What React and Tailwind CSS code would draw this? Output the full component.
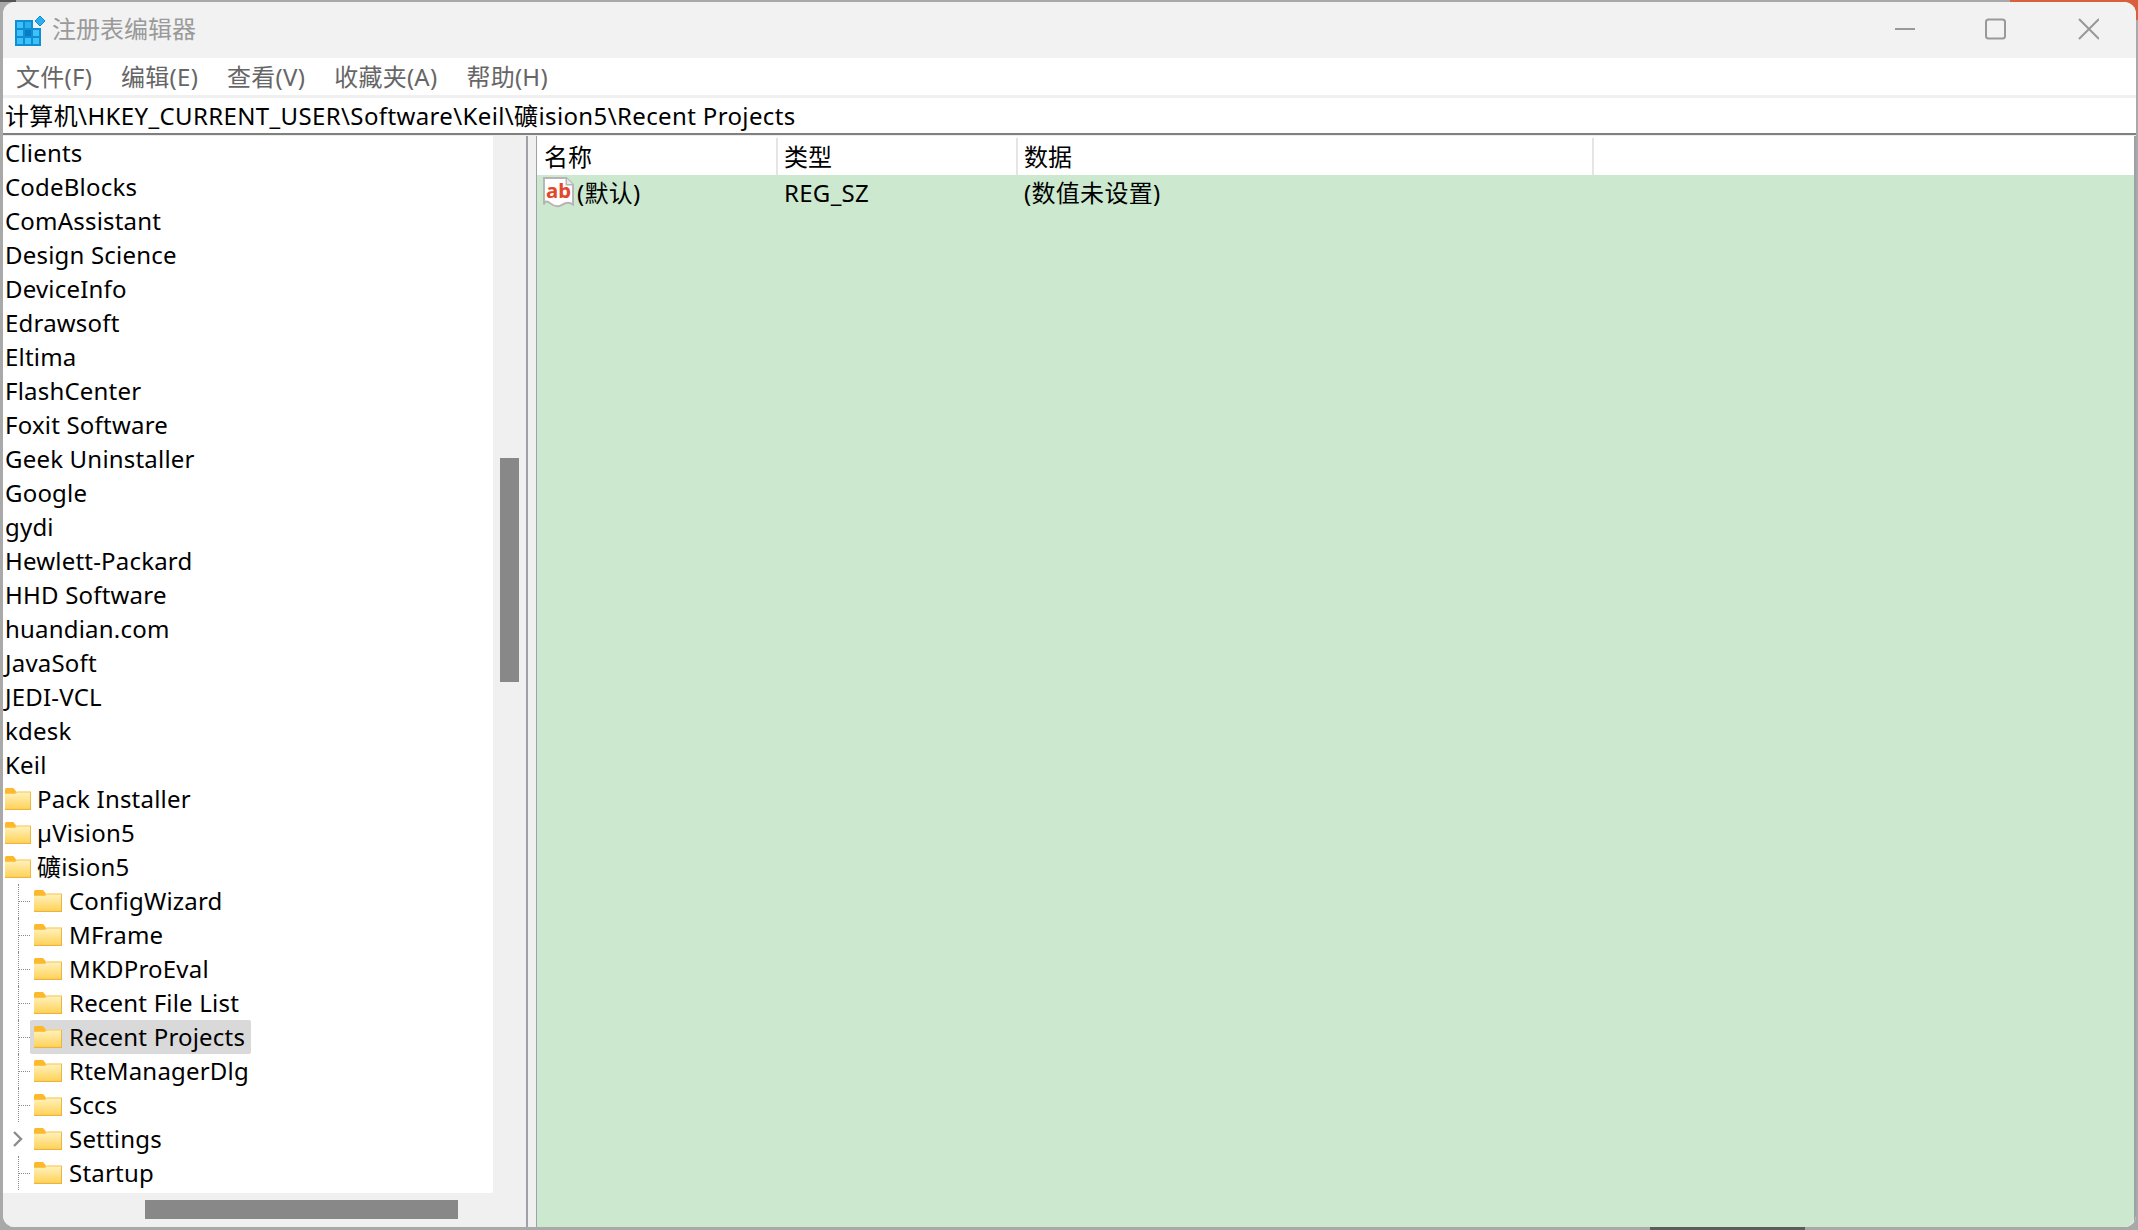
import React from "react";

const Folder = ({ w = 28 }) => (
  <svg width={w} height="22" viewBox="0 0 28 22" preserveAspectRatio="none" className="shrink-0">
    <defs>
      <linearGradient id="fg" x1="0" y1="0" x2="0" y2="1">
        <stop offset="0" stopColor="#fff3c2" />
        <stop offset="1" stopColor="#ffd053" />
      </linearGradient>
    </defs>
    <path d="M0 1.5 Q0 0 1.5 0 H9 L12 3.5 V6 H0 Z" fill="#fdb92b" />
    <path d="M0 5 H11 L13 3.5 H27 Q28 3.5 28 4.5 V22 H0 Z" fill="url(#fg)" />
    <path d="M0 21.4 H28 M27.6 4 V22" stroke="#e8b13c" strokeWidth="1" fill="none" />
    <path d="M0 5.5 H11 L13 4 H28" stroke="#f7c64f" strokeWidth="1" fill="none" />
  </svg>
);

const top = ["Clients","CodeBlocks","ComAssistant","Design Science","DeviceInfo","Edrawsoft","Eltima","FlashCenter","Foxit Software","Geek Uninstaller","Google","gydi","Hewlett-Packard","HHD Software","huandian.com","JavaSoft","JEDI-VCL","kdesk","Keil"];
const level1 = ["Pack Installer","µVision5","礦ision5"];
const level2 = ["ConfigWizard","MFrame","MKDProEval","Recent File List","Recent Projects","RteManagerDlg","Sccs","Settings","Startup"];

const Row = ({ children }) => <div className="h-[34px] flex items-center whitespace-nowrap">{children}</div>;

function Child({ name }) {
  const selected = name === "Recent Projects";
  const expander = name === "Settings";
  return (
    <Row>
      <div className="w-[25px] h-full shrink-0 relative">
        {!expander && (
          <>
            <div className="absolute left-[13px] top-0 bottom-0 border-l border-dotted border-[#8a8a8a]" />
            <div className="absolute left-[14px] right-0 top-[17px] border-t border-dotted border-[#8a8a8a]" />
          </>
        )}
        {expander && (
          <svg width="12" height="18" viewBox="0 0 12 18" className="absolute left-[7px] top-[8px]">
            <path d="M2 2 L9 9 L2 16" stroke="#8c8c8c" strokeWidth="2.4" fill="none" />
          </svg>
        )}
      </div>
      <div className={`h-full flex items-center pl-[4px] pr-[6px] rounded-[2px] ${selected ? "bg-[#d9d9d9]" : ""}`}>
        <Folder />
        <span className="ml-[7px]">{name}</span>
      </div>
    </Row>
  );
}

const menus = ["文件(F)", "编辑(E)", "查看(V)", "收藏夹(A)", "帮助(H)"];

export default function App() {
  return (
    <div className="relative w-[2138px] h-[1230px] bg-[#a9a9a9] pt-[2px] pl-[3px] pr-[2px] pb-[3px] overflow-hidden font-['Noto_Sans','Noto_Sans_CJK_SC',sans-serif] text-[24px] leading-[34px] text-black">
      {/* desktop showing behind the window */}
      <div className="absolute left-[2010px] top-0 w-[128px] h-[20px] bg-[#d9603c]" />
      <div className="absolute left-[1650px] top-[1227px] w-[155px] h-[3px] bg-[#5c5c5c]" />
      <div className="absolute left-0 top-0 w-[16px] h-[2px] bg-[#555]" />
      <div className="relative w-full h-full bg-[#f0f0f0] rounded-[12px] overflow-hidden flex flex-col">
        {/* title bar */}
        <div className="h-[56px] shrink-0 flex items-center bg-[#f2f2f2]">
          <svg width="30" height="30" viewBox="0 0 30 30" className="ml-[12px] mt-[2px] shrink-0">
            <rect x="0" y="4" width="26" height="26" fill="#0d8fd6" />
            <rect x="18" y="0" width="12" height="12" fill="#f2f2f2" />
            <g fill="#3fc1f7">
              <rect x="2" y="6" width="6" height="6" /><rect x="10" y="6" width="6" height="6" fill="#2ab0ee" />
              <rect x="2" y="14" width="6" height="6" /><rect x="10" y="14" width="6" height="6" fill="#0b7cc2" /><rect x="18" y="14" width="6" height="6" />
              <rect x="2" y="22" width="6" height="6" /><rect x="10" y="22" width="6" height="6" /><rect x="18" y="22" width="6" height="6" />
            </g>
            <path d="M25 0 L30 5 L25 10 L20 5 Z" fill="#2ab0ee" stroke="#0d8fd6" strokeWidth="1" />
          </svg>
          <span className="ml-[7px] text-[#9a9a9a] -translate-y-[1px]">注册表编辑器</span>
          <div className="flex-1" />
          <svg width="214" height="24" viewBox="0 0 214 24" className="mr-[37px] -translate-y-[1px] shrink-0" fill="none" stroke="#999" strokeWidth="2">
            <path d="M10 12 H30" />
            <rect x="101" y="2.5" width="19" height="19" rx="2.5" />
            <path d="M194 2 L214 22 M214 2 L194 22" />
          </svg>
        </div>
        {/* menu */}
        <div className="h-[37px] shrink-0 bg-white flex items-center gap-[29px] pl-[13px] text-[#666] tracking-[0.25px]">
          {menus.map((m) => <span key={m}>{m}</span>)}
        </div>
        {/* address */}
        <div className="h-[35px] mt-[3px] shrink-0 bg-white flex items-center pl-[2px] whitespace-nowrap tracking-[0.37px]">
          计算机\HKEY_CURRENT_USER\Software\Keil\礦ision5\Recent Projects
        </div>
        <div className="h-[2px] shrink-0 bg-[#808080]" />
        {/* body */}
        <div className="flex-1 flex min-h-0 pt-[1px] bg-[#e8f0e8]">
          {/* tree */}
          <div className="w-[525px] shrink-0 flex flex-col border-r-2 border-[#a0a0a8] tracking-[0.2px]">
            <div className="h-[1057px] shrink-0 flex">
              <div className="w-[490px] shrink-0 bg-white pl-[2px] rounded-br-[2px] overflow-hidden">
                {top.map((t) => <Row key={t}>{t}</Row>)}
                {level1.map((t) => (
                  <Row key={t}>
                    <Folder w={26} />
                    <span className="ml-[6px]">{t}</span>
                  </Row>
                ))}
                {level2.map((t) => <Child key={t} name={t} />)}
              </div>
              <div className="flex-1 bg-[#f0f0f0] pl-[7px] pt-[322px]">
                <div className="w-[19px] h-[224px] bg-[#888]" />
              </div>
            </div>
            <div className="flex-1 bg-[#f0f0f0] pl-[142px] pt-[7px]">
              <div className="w-[313px] h-[19px] bg-[#888]" />
            </div>
          </div>
          {/* splitter */}
          <div className="w-[8px] shrink-0 bg-[#f0f0f0]" />
          {/* list */}
          <div className="flex-1 flex flex-col border-l border-r-2 border-[#a0a0a8]">
            <div className="h-[39px] shrink-0 bg-white flex pt-[2px]">
              <div className="w-[241px] pl-[7px] flex items-center border-r-2 border-[#e5e5e5]">名称</div>
              <div className="w-[240px] pl-[6px] flex items-center border-r-2 border-[#e5e5e5]">类型</div>
              <div className="w-[576px] pl-[6px] flex items-center border-r-2 border-[#e5e5e5]">数据</div>
            </div>
            <div className="flex-1 bg-[#cce8cf] rounded-br-[10px] pt-[1px] tracking-[0.3px]">
              <div className="h-[34px] flex items-center whitespace-nowrap">
                <div className="w-[241px] flex items-center pl-[6px]">
                  <svg width="31" height="32" viewBox="0 0 32 32" className="shrink-0 -translate-y-[1px]">
                    <path d="M1 1.5 H24 L31 8.5 V29 Q26 25 20 29 T8 28 T1 29 Z" fill="#fff" stroke="#b5b5b5" strokeWidth="2" />
                    <path d="M24 1.5 V8.5 H31" fill="#e8e8e8" stroke="#b5b5b5" strokeWidth="1.5" />
                    <text x="3" y="22" fill="#e0492a" fontSize="21" fontWeight="700" fontFamily="Noto Sans, sans-serif">ab</text>
                  </svg>
                  <span className="ml-[3px]">(默认)</span>
                </div>
                <div className="w-[240px] pl-[6px]">REG_SZ</div>
                <div className="pl-[6px]">(数值未设置)</div>
              </div>
            </div>
          </div>
        </div>
      </div>
    </div>
  );
}
